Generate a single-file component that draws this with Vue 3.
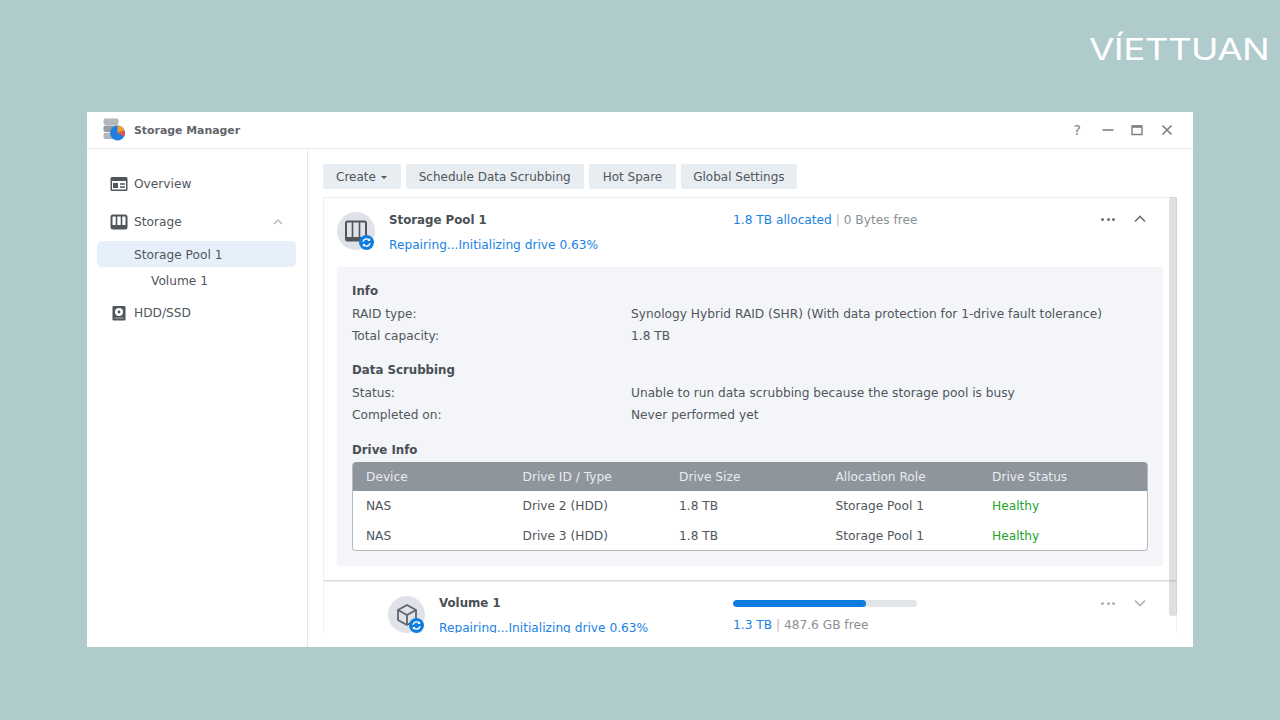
<template>
  <div class="page">
    <div class="brand"><span class="brand-text">VÍETTUAN</span></div>

    <div class="window">
      <!-- title bar -->
      <div class="titlebar">
        <svg class="app-icon" width="24" height="24" viewBox="0 0 24 24">
          <rect x="1.5" y="0.5" width="15" height="6.4" rx="1.8" fill="#b3b7ba" />
          <rect x="1.5" y="7.6" width="15" height="6.4" rx="1.8" fill="#969ca1" />
          <rect x="1.5" y="14.7" width="15" height="6.4" rx="1.8" fill="#b3b7ba" />
          <circle cx="15.5" cy="15" r="7.5" fill="#1f7fe0" />
          <path d="M15.5 15V7.5a7.5 7.5 0 0 1 7 4.9z" fill="#f0a030" />
          <path d="M15.5 15l7-2.6a7.5 7.5 0 0 1-.4 6z" fill="#e2574c" />
        </svg>
        <span class="app-name">Storage Manager</span>
        <div class="win-btns">
          <span class="help">?</span>
          <svg width="14" height="14" viewBox="0 0 14 14"><path d="M1.5 7h11" stroke="#7b8187" stroke-width="1.6" /></svg>
          <svg width="14" height="14" viewBox="0 0 14 14"><path d="M2 3h10v8.5H2z" fill="none" stroke="#7b8187" stroke-width="1.4" /><path d="M2 3.6h10" stroke="#7b8187" stroke-width="2.4" /></svg>
          <svg class="win-close" width="14" height="14" viewBox="0 0 14 14"><path d="M2.5 2.5l9 9M11.5 2.5l-9 9" stroke="#7b8187" stroke-width="1.7" /></svg>
        </div>
      </div>

      <div class="body">
        <!-- sidebar -->
        <aside class="sidebar">
          <div class="nav-item nav-first">
            <svg width="18" height="16" viewBox="0 0 18 16"><rect x="0.5" y="1" width="17" height="14" rx="1.5" fill="#50565c" /><rect x="2" y="5" width="14" height="8.5" fill="#fff" /><rect x="3" y="7" width="5" height="5" fill="#50565c" /><path d="M10 8h5M10 11h5" stroke="#50565c" stroke-width="1.4" /></svg>
            <span>Overview</span>
          </div>
          <div class="nav-item">
            <svg width="18" height="16" viewBox="0 0 18 16"><rect x="1.5" y="1.5" width="15" height="13" rx="1.5" fill="#fff" stroke="#50565c" stroke-width="2" /><path d="M6.5 2v12M11.5 2v12" stroke="#50565c" stroke-width="1.6" /><rect x="2" y="11" width="14" height="3" fill="#50565c" /></svg>
            <span>Storage</span>
            <svg class="nav-chev" width="12" height="8" viewBox="0 0 12 8"><path d="M2 6l4-4 4 4" fill="none" stroke="#b4b9bd" stroke-width="1.5" /></svg>
          </div>
          <div class="sub-item active">Storage Pool 1</div>
          <div class="sub-item indent">Volume 1</div>
          <div class="nav-item nav-last">
            <svg width="18" height="16" viewBox="0 0 18 16"><rect x="2.5" y="1" width="13" height="14.5" rx="1.2" fill="#50565c" /><circle cx="9" cy="7" r="4" fill="#fff" /><circle cx="9" cy="7" r="1.4" fill="#50565c" /><rect x="4.5" y="12.5" width="9" height="1.2" fill="#9aa0a5" /></svg>
            <span>HDD/SSD</span>
          </div>
        </aside>

        <!-- main area -->
        <main class="main">
          <div class="toolbar">
            <button class="btn btn-create">Create <i class="caret"></i></button>
            <button class="btn">Schedule Data Scrubbing</button>
            <button class="btn btn-spare">Hot Spare</button>
            <button class="btn btn-global">Global Settings</button>
          </div>

          <div class="scroll-area">
            <section class="pool-card">
              <div class="card-head">
                <div class="round-icon">
                  <svg width="24" height="24" viewBox="0 0 24 24"><rect x="2" y="2.5" width="20" height="19" rx="1.5" fill="none" stroke="#50565c" stroke-width="2" /><path d="M8.5 3v17M15.5 3v17" stroke="#50565c" stroke-width="1.6" /><rect x="2" y="18" width="20" height="3.5" fill="#50565c" /></svg>
                  <span class="sync"><svg width="15" height="15" viewBox="0 0 16 16"><circle cx="8" cy="8" r="8" fill="#0f7ce0" /><path d="M4.2 7.2A4 4 0 0 1 11 5.4M11.8 8.8A4 4 0 0 1 5 10.6" fill="none" stroke="#fff" stroke-width="1.4" /><path d="M11.9 3.4v3h-3zM4.1 12.6v-3h3z" fill="#fff" /></svg></span>
                </div>
                <div class="head-text">
                  <div class="head-title">Storage Pool 1</div>
                  <div class="head-status">Repairing...Initializing drive 0.63%</div>
                </div>
                <div class="alloc"><span class="blue">1.8 TB allocated</span> <span class="sep">|</span> 0 Bytes free</div>
                <div class="head-actions">
                  <span class="dots"><i></i><i></i><i></i></span>
                  <svg width="12" height="8" viewBox="0 0 12 8"><path d="M1 6.5l5-5 5 5" fill="none" stroke="#6b7177" stroke-width="1.6" /></svg>
                </div>
              </div>

              <div class="panel">
                <h4>Info</h4>
                <div class="kv"><span>RAID type:</span><span>Synology Hybrid RAID (SHR) (With data protection for 1-drive fault tolerance)</span></div>
                <div class="kv"><span>Total capacity:</span><span>1.8 TB</span></div>

                <h4 class="gap-a">Data Scrubbing</h4>
                <div class="kv"><span>Status:</span><span>Unable to run data scrubbing because the storage pool is busy</span></div>
                <div class="kv"><span>Completed on:</span><span>Never performed yet</span></div>

                <h4 class="gap-b">Drive Info</h4>
                <div class="drive-table">
                  <div class="tr th">
                    <span v-for="c in columns" :key="c">{{ c }}</span>
                  </div>
                  <div class="tr" v-for="d in drives" :key="d.id">
                    <span>NAS</span>
                    <span>{{ d.id }}</span>
                    <span>1.8 TB</span>
                    <span>Storage Pool 1</span>
                    <span class="healthy">Healthy</span>
                  </div>
                </div>
              </div>
            </section>

            <section class="volume-card">
              <div class="round-icon small">
                <svg width="24" height="24" viewBox="0 0 24 24"><path d="M12 2l9 5v10l-9 5-9-5V7z" fill="none" stroke="#5f656b" stroke-width="1.8" /><path d="M3 7l9 5 9-5M12 12v10" fill="none" stroke="#5f656b" stroke-width="1.8" /></svg>
                <span class="sync"><svg width="15" height="15" viewBox="0 0 16 16"><circle cx="8" cy="8" r="8" fill="#0f7ce0" /><path d="M4.2 7.2A4 4 0 0 1 11 5.4M11.8 8.8A4 4 0 0 1 5 10.6" fill="none" stroke="#fff" stroke-width="1.4" /><path d="M11.9 3.4v3h-3zM4.1 12.6v-3h3z" fill="#fff" /></svg></span>
              </div>
              <div class="head-text vol-text">
                <div class="head-title">Volume 1</div>
                <div class="head-status">Repairing...Initializing drive 0.63%</div>
              </div>
              <div class="vol-usage">
                <div class="bar"><div class="bar-fill" :style="{ width: usedPercent + '%' }"></div></div>
                <div class="vol-size"><span class="blue">1.3 TB</span> <span class="sep">|</span> 487.6 GB free</div>
              </div>
              <div class="head-actions faded">
                <span class="dots"><i></i><i></i><i></i></span>
                <svg width="12" height="8" viewBox="0 0 12 8"><path d="M1 1.5l5 5 5-5" fill="none" stroke="#6b7177" stroke-width="1.6" /></svg>
              </div>
            </section>

            <div class="scrollbar"></div>
          </div>
        </main>
      </div>
    </div>
  </div>
</template>

<script setup>
const columns = ['Device', 'Drive ID / Type', 'Drive Size', 'Allocation Role', 'Drive Status']
const drives = [{ id: 'Drive 2 (HDD)' }, { id: 'Drive 3 (HDD)' }]
const usedPercent = 72.5
</script>

<style>
html, body {
  margin: 0;
  background: #b0cbcc;
}
</style>

<style scoped>
.page {
  width: 1280px;
  height: 720px;
  overflow: hidden;
  position: relative;
  background: #b0cbcc;
  font-family: "DejaVu Sans", Verdana, sans-serif;
  font-size: 12.2px;
  color: #50565c;
  padding: 112px 0 0 87px;
  box-sizing: border-box;
}

/* logo */
.brand {
  position: absolute;
  left: 1089px;
  top: 31px;
}
.brand-text {
  display: block;
  font-family: Inter, sans-serif;
  font-size: 30px;
  line-height: 36px;
  letter-spacing: -0.5px;
  color: #fff;
  transform: scaleX(1.23);
  transform-origin: left center;
}

.window {
  width: 1106px;
  height: 535px;
  background: #fff;
  display: flex;
  flex-direction: column;
}

.titlebar {
  height: 37px;
  flex: none;
  display: flex;
  align-items: center;
  border-bottom: 1px solid #e6e9ec;
  padding: 0 19px 0 15px;
  box-sizing: border-box;
}
.app-name {
  margin-left: 8px;
  margin-top: 1px;
  font-size: 10.9px;
  font-weight: bold;
  color: #5f656b;
}
.win-btns {
  margin-left: auto;
  display: flex;
  align-items: center;
  gap: 15px;
}
.win-close {
  margin-left: 1px;
}
.help {
  font-size: 14px;
  color: #7b8187;
  margin-right: 5px;
}

.body {
  flex: 1;
  display: flex;
  min-height: 0;
}

.sidebar {
  width: 221px;
  flex: none;
  border-right: 1px solid #e6e9ec;
  box-sizing: border-box;
  padding: 16px 11px 0 10px;
}
.nav-item {
  height: 38px;
  display: flex;
  align-items: center;
  gap: 6px;
  padding-left: 13px;
  padding-right: 12px;
}
.nav-last {
  margin-top: 1px;
}
.nav-chev {
  margin-left: auto;
}
.sub-item {
  height: 26px;
  line-height: 28px;
  padding-left: 37px;
  border-radius: 5px;
}
.sub-item.active {
  background: #e6f0fb;
}
.sub-item.indent {
  padding-left: 54px;
}

.main {
  flex: 1;
  min-width: 0;
  padding: 15px 16px 14px 15px;
  display: flex;
  flex-direction: column;
}

.toolbar {
  display: flex;
  gap: 5px;
  margin-bottom: 8px;
}
.btn {
  height: 25px;
  border: none;
  border-radius: 2px;
  padding: 0 13px;
  background: #e8edf2;
  color: #50565c;
  font-family: inherit;
  font-size: 12px;
}
.btn-create {
  padding-right: 14px;
}
.btn-spare {
  padding: 0 14px;
}
.btn-global {
  padding: 0 12px;
}
.caret {
  display: inline-block;
  width: 0;
  height: 0;
  border: 3px solid transparent;
  border-top-color: #50565c;
  border-bottom: none;
  vertical-align: middle;
  margin-left: 1px;
}

.scroll-area {
  position: relative;
  flex: 1;
  min-height: 0;
  overflow: hidden;
}

.pool-card {
  height: 383px;
  box-sizing: border-box;
  border: 1px solid #eceef0;
  border-bottom: none;
  box-shadow: 0 1px 2px rgba(0, 0, 0, 0.22);
  padding: 14px 13px 0;
  margin-bottom: 1px;
}

.card-head {
  display: flex;
  height: 55px;
}
.round-icon {
  position: relative;
  width: 38px;
  height: 38px;
  flex: none;
  border-radius: 50%;
  background: #dfe3e8;
  display: flex;
  align-items: center;
  justify-content: center;
}
.round-icon.small {
  width: 37px;
  height: 37px;
}
.sync {
  position: absolute;
  right: 1px;
  bottom: 0;
  width: 15px;
  height: 15px;
  line-height: 0;
}

.head-text {
  margin-left: 14px;
  width: 344px;
  flex: none;
}
.head-title {
  font-size: 11.8px;
  font-weight: bold;
  color: #494f55;
  line-height: 16px;
}
.head-status {
  margin-top: 9px;
  line-height: 16px;
  color: #1a82e2;
}
.alloc {
  line-height: 16px;
  color: #8a9095;
}
.blue {
  color: #1a82e2;
}
.sep {
  color: #b6bbc0;
}
.head-actions {
  position: absolute;
  top: 0;
  right: 31px;
  height: 44px;
  display: flex;
  align-items: center;
  gap: 19px;
}
.dots {
  display: flex;
  gap: 2.5px;
}
.dots i {
  width: 3px;
  height: 3px;
  border-radius: 50%;
  background: #6b7177;
}
.head-actions.faded {
  opacity: 0.55;
  top: 384px;
}

.panel {
  height: 299px;
  box-sizing: border-box;
  background: #f3f5f9;
  border-radius: 3px;
  padding: 16px 15px 0;
  line-height: 22px;
}
.panel h4 {
  margin: 0 0 3px;
  font-size: 11.8px;
  line-height: 17px;
  font-weight: bold;
  color: #494f55;
}
.panel h4.gap-a {
  margin-top: 15px;
  margin-bottom: 3px;
}
.panel h4.gap-b {
  margin-top: 16px;
  margin-bottom: 3px;
}
.kv {
  display: grid;
  grid-template-columns: 279px 1fr;
}

.drive-table {
  width: 796px;
  height: 89px;
  box-sizing: border-box;
  border: 1px solid #b4b9be;
  border-top: none;
  border-radius: 4px;
  background: #fff;
  overflow: hidden;
}
.tr {
  display: grid;
  grid-template-columns: repeat(5, 156.5px);
  padding-left: 13px;
  height: 29.5px;
  line-height: 31.5px;
}
.tr.th {
  height: 29px;
  line-height: 31px;
  margin-left: -1px;
  padding-left: 14px;
  width: 100%;
  background: #8e959c;
  color: #e9ecef;
}
.healthy {
  color: #22a32a;
}

.volume-card {
  height: 60px;
  border-left: 1px solid #f0f1f3;
  border-right: 1px solid #f0f1f3;
  display: flex;
  padding: 15px 0 0 64px;
}
.vol-text {
  margin-left: 14px;
  width: 294px;
}
.vol-text .head-title {
  margin-top: -1px;
}
.vol-usage {
  width: 184px;
}
.bar {
  height: 7px;
  margin-top: 4px;
  background: #e3e6e9;
  border-radius: 4px;
  overflow: hidden;
}
.bar-fill {
  height: 100%;
  background: #0f7ce0;
  border-radius: 4px;
}
.vol-size {
  margin-top: 10px;
  line-height: 16px;
  color: #8a9095;
}

.scrollbar {
  position: absolute;
  top: 0;
  right: 0;
  width: 8px;
  height: 419px;
  background: rgba(120, 120, 120, 0.24);
  border-radius: 3px;
}
</style>
